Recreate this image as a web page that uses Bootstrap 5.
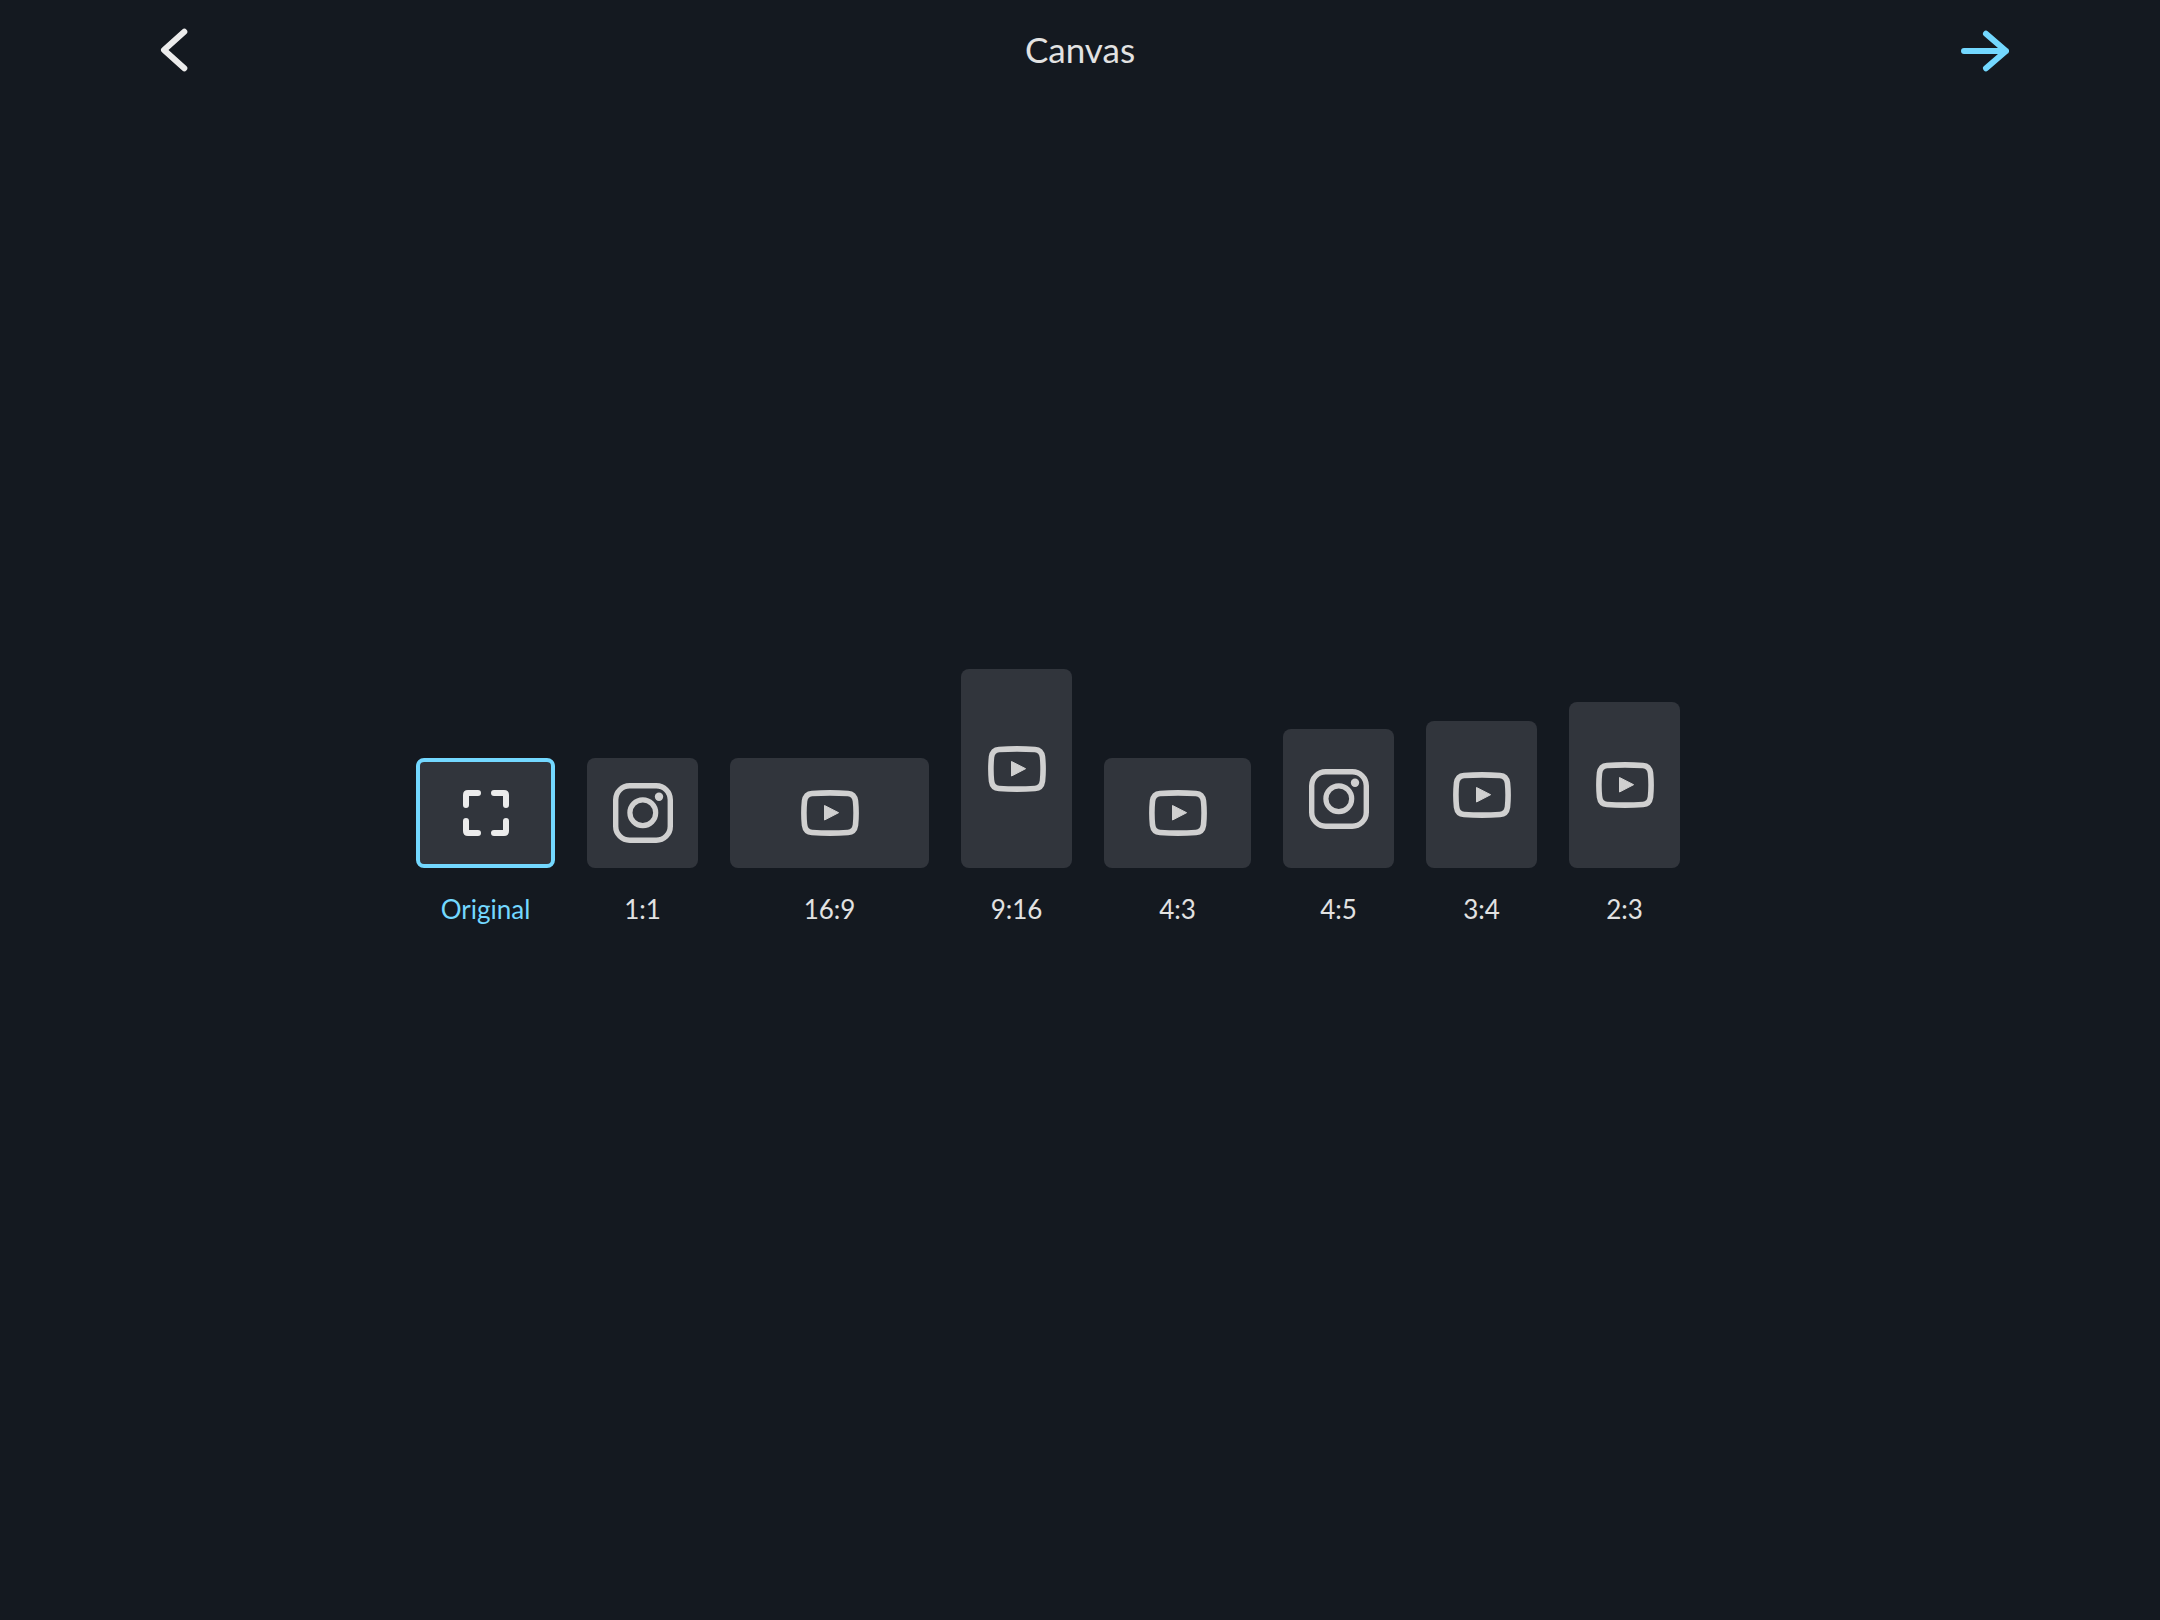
<!DOCTYPE html>
<html lang="en">
<head>
<meta charset="utf-8">
<meta name="viewport" content="width=device-width, initial-scale=1">
<title>Canvas</title>
<link href="https://cdn.jsdelivr.net/npm/bootstrap@5.3.0/dist/css/bootstrap.min.css" rel="stylesheet">
<style>
  body { background: #141920; color: #e2e2e2; font-family: Lato, "Open Sans", sans-serif; }
  .top-bar { height: 100px; padding: 0 151px; }
  .top-title { font-size: 35px; line-height: 40px; font-weight: 400; padding-bottom: 2px; }
  .icon-btn { width: 48px; height: 48px; color: #ececec; }
  .icon-btn.next { color: #73d8ff; }
  .stage { padding: 0 64px 122px 0; }
  .ratios { gap: 32px; }
  .ratio-option { color: #e2e2e2; font-size: 26px; line-height: 40px; gap: 21px; }
  .tile { width: 111px; height: 110px; border-radius: 8px; background: #31353c; color: #d0d0d0; }
  .ratio-option.active { color: #73d8ff; }
  .ratio-option.active .tile { border: 4px solid #73d8ff; color: #ececec; }
  .r-original { width: 139px; }
  .r-16-9 { width: 199px; }
  .r-9-16 { height: 199px; }
  .r-4-3 { width: 147px; }
  .r-4-5 { height: 139px; }
  .r-3-4 { height: 147px; }
  .r-2-3 { height: 166px; }
</style>
<script src="https://cdn.jsdelivr.net/npm/bootstrap@5.3.0/dist/js/bootstrap.bundle.min.js"></script>
</head>
<body class="min-vh-100 d-flex flex-column">
<svg class="d-none" aria-hidden="true">
  <symbol id="youtube" viewBox="0 0 58 46">
    <path d="M11 3.500Q29 2.300 47 3.500Q53.500 4 54.500 11Q55.700 23 54.500 35Q53.500 42 47 42.500Q29 43.700 11 42.500Q4.500 42 3.500 35Q2.300 23 3.500 11Q4.500 4 11 3.500Z" fill="none" stroke="currentColor" stroke-width="5.600"/>
    <path d="M23.500 15.500 37.600 22.700 23.500 30Z" fill="currentColor" stroke="currentColor" stroke-linejoin="round"/>
  </symbol>
  <symbol id="instagram" viewBox="0 0 60 60">
    <rect x="2.700" y="2.700" width="54.600" height="54.600" rx="14" fill="none" stroke="currentColor" stroke-width="5.400"/>
    <circle cx="29.800" cy="29.800" r="12.900" fill="none" stroke="currentColor" stroke-width="5.200"/>
    <circle cx="46" cy="13.700" r="4.200" fill="currentColor"/>
  </symbol>
</svg>

<header class="top-bar d-flex align-items-center justify-content-between">
  <button type="button" class="icon-btn btn p-0 border-0 d-flex" aria-label="Back">
    <svg width="48" height="48" viewBox="0 0 48 48" fill="none" stroke="currentColor" stroke-width="6" stroke-linecap="round" stroke-linejoin="round"><path d="M33.300 5.700 13 24 33.300 42.300"/></svg>
  </button>
  <h1 class="top-title mb-0">Canvas</h1>
  <button type="button" class="icon-btn next btn p-0 border-0 d-flex" aria-label="Next">
    <svg width="48" height="48" viewBox="0 0 48 48" fill="none" stroke="currentColor" stroke-width="6" stroke-linecap="round" stroke-linejoin="round"><path d="M3 25H45M25 7.800 45 25 25 42.200"/></svg>
  </button>
</header>

<main class="stage flex-grow-1 d-flex align-items-center justify-content-center">
  <div class="ratios d-flex align-items-end" role="group" aria-label="Canvas ratio">
    <button type="button" class="ratio-option active btn p-0 border-0 d-flex flex-column align-items-center" aria-pressed="true">
      <span class="tile r-original d-flex align-items-center justify-content-center">
        <svg width="46" height="46" viewBox="0 0 46 46" fill="none" stroke="currentColor" stroke-width="6" stroke-linecap="round"><path d="M3 15V5Q3 3 5 3H15M31 3H41Q43 3 43 5V15M43 31V41Q43 43 41 43H31M15 43H5Q3 43 3 41V31"/></svg>
      </span>
      <span>Original</span>
    </button>
    <button type="button" class="ratio-option btn p-0 border-0 d-flex flex-column align-items-center" aria-pressed="false">
      <span class="tile d-flex align-items-center justify-content-center"><svg width="60" height="60"><use href="#instagram"/></svg></span>
      <span>1:1</span>
    </button>
    <button type="button" class="ratio-option btn p-0 border-0 d-flex flex-column align-items-center" aria-pressed="false">
      <span class="tile r-16-9 d-flex align-items-center justify-content-center"><svg width="58" height="46"><use href="#youtube"/></svg></span>
      <span>16:9</span>
    </button>
    <button type="button" class="ratio-option btn p-0 border-0 d-flex flex-column align-items-center" aria-pressed="false">
      <span class="tile r-9-16 d-flex align-items-center justify-content-center"><svg width="58" height="46"><use href="#youtube"/></svg></span>
      <span>9:16</span>
    </button>
    <button type="button" class="ratio-option btn p-0 border-0 d-flex flex-column align-items-center" aria-pressed="false">
      <span class="tile r-4-3 d-flex align-items-center justify-content-center"><svg width="58" height="46"><use href="#youtube"/></svg></span>
      <span>4:3</span>
    </button>
    <button type="button" class="ratio-option btn p-0 border-0 d-flex flex-column align-items-center" aria-pressed="false">
      <span class="tile r-4-5 d-flex align-items-center justify-content-center"><svg width="60" height="60"><use href="#instagram"/></svg></span>
      <span>4:5</span>
    </button>
    <button type="button" class="ratio-option btn p-0 border-0 d-flex flex-column align-items-center" aria-pressed="false">
      <span class="tile r-3-4 d-flex align-items-center justify-content-center"><svg width="58" height="46"><use href="#youtube"/></svg></span>
      <span>3:4</span>
    </button>
    <button type="button" class="ratio-option btn p-0 border-0 d-flex flex-column align-items-center" aria-pressed="false">
      <span class="tile r-2-3 d-flex align-items-center justify-content-center"><svg width="58" height="46"><use href="#youtube"/></svg></span>
      <span>2:3</span>
    </button>
  </div>
</main>
</body>
</html>
